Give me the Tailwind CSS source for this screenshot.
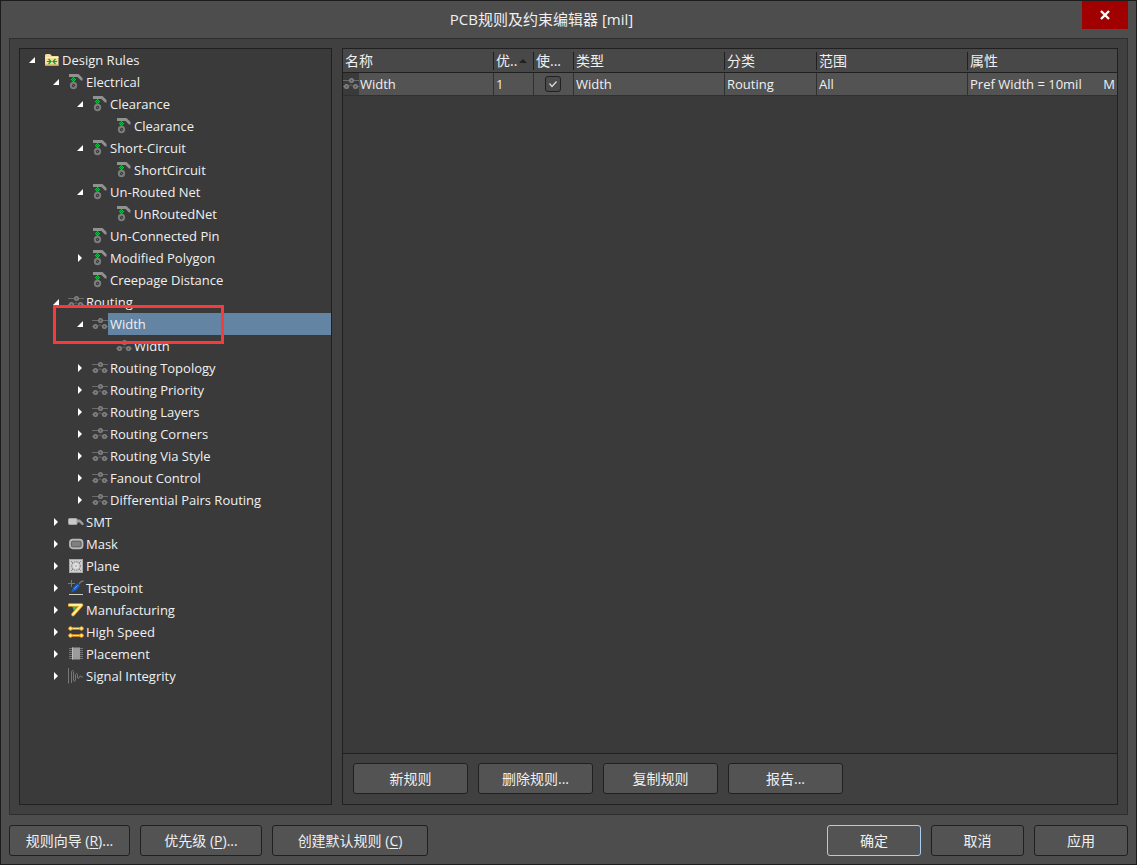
<!DOCTYPE html>
<html lang="zh-CN">
<head>
<meta charset="utf-8">
<title>PCB规则及约束编辑器 [mil]</title>
<script src="https://cdn.jsdelivr.net/npm/@tailwindcss/browser@4"></script>
</head>
<body class="h-screen min-h-[600px] flex flex-col overflow-hidden border border-[#1c1c1c] bg-[#4d4d4d] text-[#f0f0f0] text-[14px] leading-[20px] font-['Open_Sans','Noto_Sans_CJK_SC',sans-serif]">

<svg class="hidden" aria-hidden="true">
  <symbol id="folder" viewBox="0 0 16 16">
    <path d="M1 4V3L2 2H6L8 4H14.500V13.500H1Z" fill="#f3dc9c"/>
    <path d="M1 12.500H14.500V14H1Z" fill="#c9a24d"/>
    <path d="M1.500 5.500H14.500" stroke="#fff3cd"/>
    <path d="M3 9.500H7M13 9.500H9M4.500 7L7 9.500L4.500 12M11.500 7L9 9.500L11.500 12" stroke="#129a30" stroke-width="1.200" fill="none"/>
  </symbol>
  <symbol id="elec" viewBox="0 0 16 16">
    <path d="M1 0H10.500L14.500 4V6.500H13L9.500 3H1Z" fill="#919191"/>
    <circle cx="5.500" cy="11.500" r="2.700" fill="#3c3c3c" stroke="#7d7d7d" stroke-width="1.900"/>
    <path d="M4.500 10.500L6.500 12.500" stroke="#707070"/>
    <path d="M3 5L5.500 3L8 5L7 8H4Z" fill="#0fa83a" opacity=".45"/>
    <path d="M4 4h1v1H4zM6 4h1v1H6zM3 5h1v1H3zM5 5h1v1H5zM7 5h1v1H7zM4 6h1v1H4zM6 6h1v1H6zM5 7h1v1H5zM5 3h1v1H5z" fill="#0fc040"/>
  </symbol>
  <symbol id="route" viewBox="0 0 16 16">
    <path d="M0 4.500H16M0 10.500H2M5 10.500H6L8 8.500L10 10.500H11M14 10.500H16" stroke="#6c6c6c" fill="none"/>
    <circle cx="8.500" cy="4.500" r="1.700" fill="#505050" stroke="#828282" stroke-width="1.600"/>
    <circle cx="3.500" cy="10.500" r="1.700" fill="#505050" stroke="#828282" stroke-width="1.600"/>
    <circle cx="12.500" cy="10.500" r="1.700" fill="#505050" stroke="#828282" stroke-width="1.600"/>
  </symbol>
  <symbol id="smt" viewBox="0 0 16 16">
    <path d="M8 5.500H12L15.500 9V11H14L11.500 8.500H8Z" fill="#9a9a9a"/>
    <rect x=".5" y="4.500" width="8.500" height="6" rx="1" fill="#c9c9c9" stroke="#a5a5a5"/>
  </symbol>
  <symbol id="mask" viewBox="0 0 16 16">
    <rect x="2" y="3.750" width="12.500" height="8.500" rx="2.800" fill="#808080" stroke="#b9b9b9" stroke-width="1.800"/>
    <rect x="3.500" y="5.250" width="9.500" height="5.500" rx="1" fill="none" stroke="#5c5c5c" stroke-width=".8"/>
  </symbol>
  <symbol id="plane" viewBox="0 0 16 16">
    <rect x="1" y="1" width="14" height="14" fill="#cfcfcf"/>
    <rect x="1.500" y="1.500" width="13" height="13" fill="none" stroke="#a9a9a9"/>
    <circle cx="8" cy="8" r="4.300" fill="none" stroke="#777" stroke-dasharray="1.500 1"/>
    <circle cx="8" cy="8" r="2" fill="#bdbdbd" stroke="#f1f1f1"/>
    <path d="M3 3L5 5M13 3L11 5M3 13L5 11M13 13L11 11" stroke="#888"/>
  </symbol>
  <symbol id="test" viewBox="0 0 16 16">
    <path d="M0 3.500H7M3.500 0V7" stroke="#12b932"/>
    <path d="M11 4L13 1.500L15.500 1" stroke="#777" fill="none" stroke-width="1.300"/>
    <path d="M3 12.500L5 8L9 3.500L12 5.500L8.500 10Z" fill="#1463dc"/>
    <path d="M6 9L9.500 5.500" stroke="#59a2ff"/>
    <path d="M1 14.500H15" stroke="#d0d0d0"/>
  </symbol>
  <symbol id="manu" viewBox="0 0 16 16">
    <path d="M4 4H10L6 9Z" fill="#16c765"/>
    <path d="M1.500 3H13.500L5 12.500" fill="none" stroke="#e09d1f" stroke-width="3.600" stroke-linejoin="round" stroke-linecap="round"/>
    <path d="M1.500 3H13.500L5 12.500" fill="none" stroke="#fff0a0" stroke-width="1.900" stroke-linejoin="round" stroke-linecap="round"/>
  </symbol>
  <symbol id="speed" viewBox="0 0 16 16">
    <g stroke="#ee9714" fill="#fff0a0">
      <path d="M3 4.500H13M3 11.500H13" stroke-width="2.600"/>
      <path d="M3 4.500H13M3 11.500H13" stroke="#ffe28a"/>
      <circle cx="2.500" cy="4.500" r="1.800"/><circle cx="13.500" cy="4.500" r="1.800"/>
      <circle cx="2.500" cy="11.500" r="1.800"/><circle cx="13.500" cy="11.500" r="1.800"/>
    </g>
  </symbol>
  <symbol id="place" viewBox="0 0 16 16">
    <path d="M1 2.500H15M1 4.500H15M1 6.500H15M1 8.500H15M1 10.500H15M1 12.500H15" stroke="#747474"/>
    <rect x="4" y="1.500" width="8" height="12" fill="#9b9b9b"/>
    <path d="M4.500 1.500V13.500" stroke="#bcbcbc"/>
  </symbol>
  <symbol id="signal" viewBox="0 0 16 16">
    <path d="M.5 0V15.500M3.500 15V3.500Q4.500 1 5.500 3.500V12Q6.500 15 7.500 12V6.500Q8.500 4 9.500 6.500V10Q10.500 12 11.500 8.500Q12.500 6.500 13 9L15 9" fill="none" stroke="#777"/>
  </symbol>
</svg>

<header class="flex h-[37px] shrink-0 items-start pr-2">
  <h1 class="flex-1 pt-[8px] text-center text-[15px] leading-[20px] font-normal">PCB规则及约束编辑器 [mil]</h1>
  <button aria-label="关闭" class="flex h-7 w-[46px] items-center justify-center bg-[#a00000]">
    <svg class="h-[10px] w-[10px]" viewBox="0 0 10 10"><path d="M1 1L9 9M9 1L1 9" stroke="#fff" stroke-width="2.400"/></svg>
  </button>
</header>

<main class="mx-2 flex min-h-0 flex-1 gap-[10px] border border-[#2e2e2e] bg-[#404040] p-[9px]">
  <nav aria-label="Design Rules" class="w-[313px] shrink-0 overflow-hidden border border-[#202020] bg-[#3a3a3a]">
    <ul id="tree"></ul>
  </nav>

  <section class="flex min-w-0 flex-1 flex-col border border-[#202020]">
    <div class="min-h-0 flex-1 overflow-hidden bg-[#3a3a3a]">
      <table class="w-full table-fixed border-separate border-spacing-0 text-left">
        <colgroup><col class="w-[151px]"><col class="w-10"><col class="w-10"><col class="w-[151px]"><col class="w-[92px]"><col class="w-[151px]"><col></colgroup>
        <thead>
          <tr class="h-6 bg-[#484848]">
            <th class="border-b border-[#202020] p-0 font-normal"><div class="border-r border-[#202020] pl-[2px] leading-[18px]">名称</div></th>
            <th class="border-b border-[#202020] p-0 font-normal"><div class="flex items-center justify-between border-r border-[#202020] pr-[6px] pl-[2px] leading-[18px]">优..<svg class="h-1 w-2" viewBox="0 0 8 4"><path d="M0 4L4 0L8 4Z" fill="#202020"/></svg></div></th>
            <th class="border-b border-[#202020] p-0 font-normal"><div class="border-r border-[#202020] pl-[2px] leading-[18px]">使...</div></th>
            <th class="border-b border-[#202020] p-0 font-normal"><div class="border-r border-[#202020] pl-[2px] leading-[18px]">类型</div></th>
            <th class="border-b border-[#202020] p-0 font-normal"><div class="border-r border-[#202020] pl-[2px] leading-[18px]">分类</div></th>
            <th class="border-b border-[#202020] p-0 font-normal"><div class="border-r border-[#202020] pl-[2px] leading-[18px]">范围</div></th>
            <th class="border-b border-[#202020] p-0 font-normal"><div class="pl-[2px] leading-[18px]">属性</div></th>
          </tr>
        </thead>
        <tbody>
          <tr class="h-[23px] bg-[#535353] text-[13px]">
            <td class="border-r border-b border-[#303030] p-0"><div class="flex items-center"><span class="flex h-[22px] items-center bg-[#3a3a3a]"><svg class="size-4"><use href="#route"/></svg></span><span class="pl-px">Width</span></div></td>
            <td class="border-r border-b border-[#303030] p-0 pl-[2px]">1</td>
            <td class="border-r border-b border-[#303030] p-0"><label class="relative ml-[11px] flex size-4 items-center justify-center"><input type="checkbox" checked aria-label="使能" class="absolute inset-0 size-4 appearance-none rounded-[3px] border border-[#202020] bg-[#4b4b4b]"><svg class="relative h-2 w-2" viewBox="0 0 8 8"><path d="M.5 3.500L3 6.500L7.500 1.500" fill="none" stroke="#ddd" stroke-width="1.200"/></svg></label></td>
            <td class="border-r border-b border-[#303030] p-0 pl-[2px]">Width</td>
            <td class="border-r border-b border-[#303030] p-0 pl-[2px]">Routing</td>
            <td class="border-r border-b border-[#303030] p-0 pl-[2px]">All</td>
            <td class="border-b border-[#303030] p-0 pl-[2px]"><div class="flex justify-between pr-[2px] whitespace-nowrap"><span>Pref Width = 10mil</span><span>M</span></div></td>
          </tr>
        </tbody>
      </table>
    </div>
    <div class="flex gap-[10px] border-t border-[#202020] px-[10px] pt-[9px] pb-[10px]">
      <button class="h-[31px] w-[115px] rounded-[3px] border border-[#202020] bg-[#535353]">新规则</button>
      <button class="h-[31px] w-[115px] rounded-[3px] border border-[#202020] bg-[#535353]">删除规则...</button>
      <button class="h-[31px] w-[115px] rounded-[3px] border border-[#202020] bg-[#535353]">复制规则</button>
      <button class="h-[31px] w-[115px] rounded-[3px] border border-[#202020] bg-[#535353]">报告...</button>
    </div>
  </section>
</main>

<footer class="flex shrink-0 gap-[10px] px-2 pt-[10px] pb-2">
  <button class="h-[31px] w-[121px] rounded-[3px] border border-[#202020] bg-[#535353]">规则向导 (<u class="underline-offset-2">R</u>)...</button>
  <button class="h-[31px] w-[122px] rounded-[3px] border border-[#202020] bg-[#535353]">优先级 (<u class="underline-offset-2">P</u>)...</button>
  <button class="h-[31px] w-[156px] rounded-[3px] border border-[#202020] bg-[#535353]">创建默认规则 (<u class="underline-offset-2">C</u>)</button>
  <button class="ml-auto h-[31px] w-[94px] rounded-[3px] border border-[#a9cdf0] bg-[#535353]">确定</button>
  <button class="h-[31px] w-[93px] rounded-[3px] border border-[#202020] bg-[#535353]">取消</button>
  <button class="h-[31px] w-[94px] rounded-[3px] border border-[#202020] bg-[#535353]">应用</button>
</footer>

<script>
// [label, icon, children, selected]; children: array = expanded, true = collapsed, absent = leaf
const rules = ['Design Rules', 'folder', [
  ['Electrical', 'elec', [
    ['Clearance', 'elec', [['Clearance', 'elec']]],
    ['Short-Circuit', 'elec', [['ShortCircuit', 'elec']]],
    ['Un-Routed Net', 'elec', [['UnRoutedNet', 'elec']]],
    ['Un-Connected Pin', 'elec'],
    ['Modified Polygon', 'elec', true],
    ['Creepage Distance', 'elec'],
  ]],
  ['Routing', 'route', [
    ['Width', 'route', [['Width', 'route']], true],
    ['Routing Topology', 'route', true],
    ['Routing Priority', 'route', true],
    ['Routing Layers', 'route', true],
    ['Routing Corners', 'route', true],
    ['Routing Via Style', 'route', true],
    ['Fanout Control', 'route', true],
    ['Differential Pairs Routing', 'route', true],
  ]],
  ['SMT', 'smt', true], ['Mask', 'mask', true], ['Plane', 'plane', true],
  ['Testpoint', 'test', true], ['Manufacturing', 'manu', true],
  ['High Speed', 'speed', true], ['Placement', 'place', true],
  ['Signal Integrity', 'signal', true],
]];
const open = '<button aria-label="Collapse" class="flex w-6 justify-center"><svg class="size-[6px]" viewBox="0 0 6 6"><path d="M6 0V6H0Z" fill="#fff"/></svg></button>';
const shut = '<button aria-label="Expand" class="flex w-6 justify-center"><svg class="h-2 w-1" viewBox="0 0 4 8"><path d="M0 0L4 4L0 8Z" fill="#fff"/></svg></button>';
function item([name, icon, kids, selected]) {
  const toggle = Array.isArray(kids) ? open : kids ? shut : '<span class="w-6"></span>';
  const tint = selected ? 'flex-1 bg-[#6384a3] pl-[2px] leading-[22px]' : 'flex-1 pl-[2px] leading-[22px]';
  // red frame that calls out the selected rule
  const mark = selected ? '<span class="pointer-events-none absolute -top-2 -left-[15px] z-10 h-[39px] w-[171px] border-3 border-[#f93a3a]"></span>' : '';
  const sub = Array.isArray(kids) ? `<ul class="pl-6">${kids.map(item).join('')}</ul>` : '';
  return `<li><div class="relative flex h-[22px] items-center text-[13px] whitespace-nowrap">${toggle}<svg class="size-4 shrink-0"><use href="#${icon}"/></svg><span class="${tint}">${name}</span>${mark}</div>${sub}</li>`;
}
document.getElementById('tree').innerHTML = item(rules);
</script>
</body>
</html>
